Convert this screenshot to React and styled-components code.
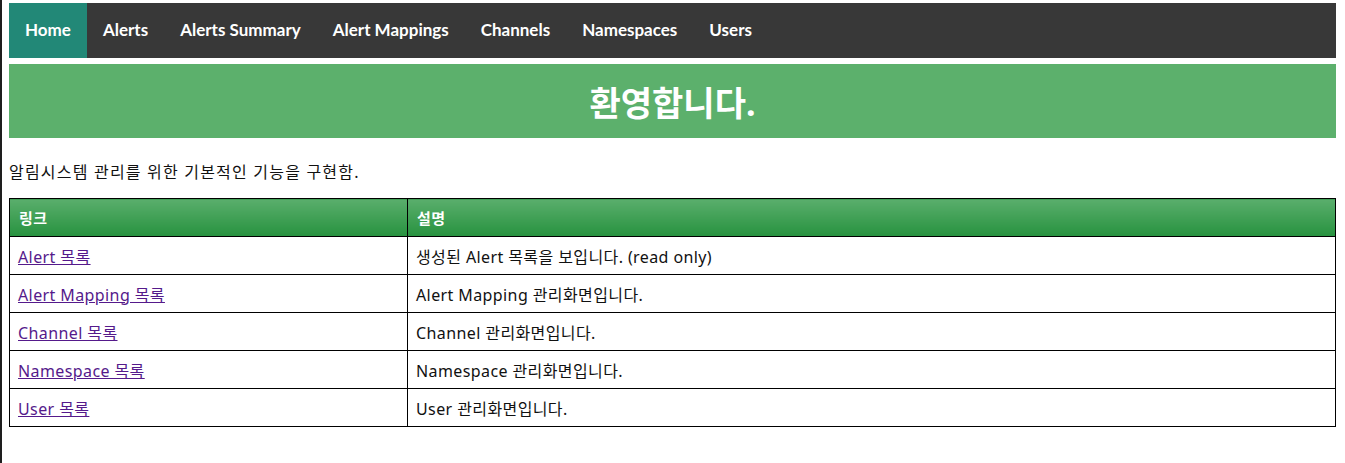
import React from 'react';
import styled, { createGlobalStyle } from 'styled-components';

const GlobalStyle = createGlobalStyle`
  html, body {
    margin: 0;
    padding: 0;
    background: #fff;
  }
  body {
    font-family: "Noto Sans", "Noto Sans CJK KR", sans-serif;
    color: #111;
    border-left: 2px solid #1e1e1e;
    min-height: 463px;
    box-sizing: border-box;
  }
`;

const Page = styled.div`
  padding: 3px 9px 0 7px;
`;

const NavBar = styled.nav`
  display: flex;
  align-items: stretch;
  height: 55px;
  background: #383838;
`;

const NavItem = styled.a`
  display: flex;
  align-items: center;
  padding: 0 16px 2px;
  color: #fff;
  font-family: Lato, "Noto Sans", sans-serif;
  font-weight: 700;
  font-size: 17px;
  text-decoration: none;
  background: ${props => (props.active ? '#228877' : 'transparent')};
`;

const Banner = styled.header`
  margin-top: 6px;
  height: 74px;
  background: #5cb06c;
  display: flex;
  align-items: center;
  justify-content: center;
`;

const BannerTitle = styled.h1`
  margin: 0;
  color: #fff;
  font-size: 34px;
  font-weight: 700;
`;

const Intro = styled.p`
  margin: 21px 0 15px;
  font-size: 16px;
  letter-spacing: 1.2px;
`;

const Table = styled.table`
  width: 100%;
  border-collapse: collapse;
  border: 1px solid #000;
  font-size: 16px;
  letter-spacing: 0.4px;
`;

const HeadCell = styled.th`
  text-align: left;
  height: 37px;
  padding: 0 9px;
  color: #fff;
  font-size: 15px;
  font-weight: 700;
  border: 1px solid #000;
  background: linear-gradient(to bottom, #5aae6c, #27923f);
  width: ${props => props.width || 'auto'};
`;

const Cell = styled.td`
  height: 37px;
  padding: 0 8px;
  border: 1px solid #000;
`;

const LinkText = styled.a`
  color: #551a8b;
  text-decoration: underline;
`;

const navItems = ['Home', 'Alerts', 'Alerts Summary', 'Alert Mappings', 'Channels', 'Namespaces', 'Users'];

const rows = [
  { link: 'Alert 목록', desc: '생성된 Alert 목록을 보입니다. (read only)' },
  { link: 'Alert Mapping 목록', desc: 'Alert Mapping 관리화면입니다.' },
  { link: 'Channel 목록', desc: 'Channel 관리화면입니다.' },
  { link: 'Namespace 목록', desc: 'Namespace 관리화면입니다.' },
  { link: 'User 목록', desc: 'User 관리화면입니다.' },
];

const App = () => {
  return (
    <Page>
      <GlobalStyle />
      <NavBar>
        {navItems.map((item, i) => (
          <NavItem key={item} href="#" active={i === 0}>{item}</NavItem>
        ))}
      </NavBar>
      <Banner>
        <BannerTitle>환영합니다.</BannerTitle>
      </Banner>
      <Intro>알림시스템 관리를 위한 기본적인 기능을 구현함.</Intro>
      <Table>
        <thead>
          <tr>
            <HeadCell width="379px">링크</HeadCell>
            <HeadCell>설명</HeadCell>
          </tr>
        </thead>
        <tbody>
          {rows.map(row => (
            <tr key={row.link}>
              <Cell><LinkText href="#">{row.link}</LinkText></Cell>
              <Cell>{row.desc}</Cell>
            </tr>
          ))}
        </tbody>
      </Table>
    </Page>
  );
};

export default App;
